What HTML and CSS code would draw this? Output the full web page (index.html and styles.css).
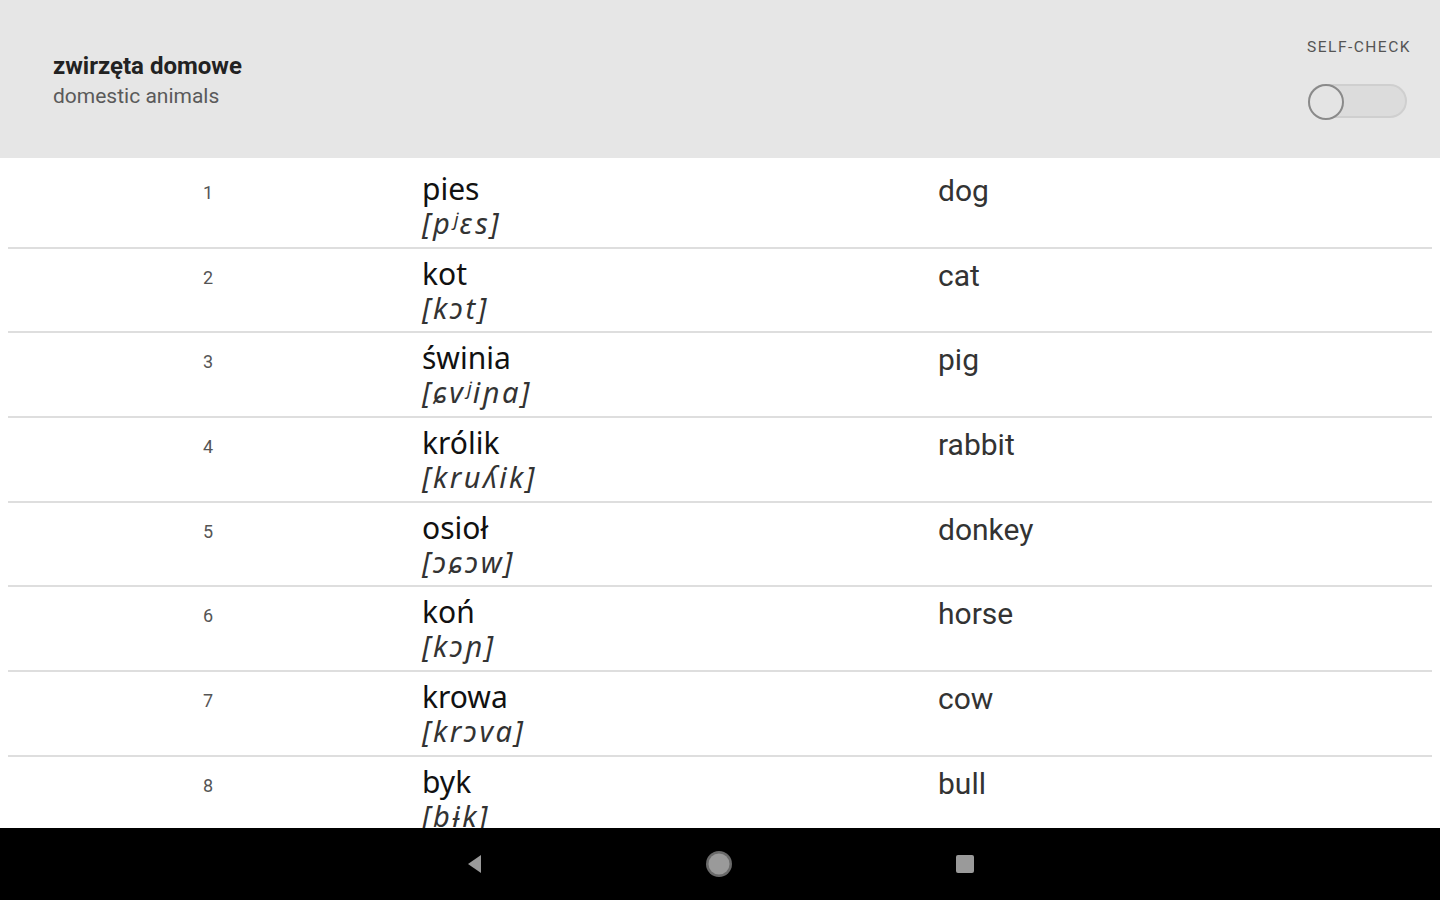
FILE: index.html
```html
<!DOCTYPE html>
<html lang="pl">
<head>
<meta charset="utf-8">
<title>zwirzęta domowe</title>
<link rel="stylesheet" href="styles.css">
</head>
<body>
<div class="screen">
  <header class="header">
    <div class="titles">
      <div class="title">zwirzęta domowe</div>
      <div class="subtitle">domestic animals</div>
    </div>
    <div class="selfcheck">
      <div class="sc-label">SELF-CHECK</div>
      <div class="switch"><div class="thumb"></div></div>
    </div>
  </header>
  <main class="list">
    <div class="row"><div class="num">1</div><div class="word"><div class="pl">pies</div><div class="ipa">[pʲɛs]</div></div><div class="en">dog</div></div>
    <div class="row"><div class="num">2</div><div class="word"><div class="pl">kot</div><div class="ipa">[kɔt]</div></div><div class="en">cat</div></div>
    <div class="row"><div class="num">3</div><div class="word"><div class="pl">świnia</div><div class="ipa">[ɕvʲiɲa]</div></div><div class="en">pig</div></div>
    <div class="row"><div class="num">4</div><div class="word"><div class="pl">królik</div><div class="ipa">[kruʎik]</div></div><div class="en">rabbit</div></div>
    <div class="row"><div class="num">5</div><div class="word"><div class="pl">osioł</div><div class="ipa">[ɔɕɔw]</div></div><div class="en">donkey</div></div>
    <div class="row"><div class="num">6</div><div class="word"><div class="pl">koń</div><div class="ipa">[kɔɲ]</div></div><div class="en">horse</div></div>
    <div class="row"><div class="num">7</div><div class="word"><div class="pl">krowa</div><div class="ipa">[krɔva]</div></div><div class="en">cow</div></div>
    <div class="row"><div class="num">8</div><div class="word"><div class="pl">byk</div><div class="ipa">[bɨk]</div></div><div class="en">bull</div></div>
  </main>
  <nav class="navbar">
    <svg class="nav-icon" width="20" height="22" viewBox="0 0 20 22"><path d="M17 2 L4 11 L17 20 Z" fill="#9a9a9a"/></svg>
    <svg class="nav-icon" width="30" height="30" viewBox="0 0 30 30"><circle cx="15" cy="15" r="13" fill="#6a6a6a"/><circle cx="15" cy="15" r="10.5" fill="#9a9a9a"/></svg>
    <svg class="nav-icon" width="22" height="22" viewBox="0 0 22 22"><rect x="2" y="2" width="18" height="18" rx="2" fill="#9a9a9a"/></svg>
  </nav>
</div>
</body>
</html>
```
FILE: styles.css
```css
* { box-sizing: border-box; }
html, body { margin: 0; padding: 0; }
body {
  background: #ffffff;
  font-family: Roboto, "Noto Sans", sans-serif;
}
.screen {
  width: 1440px;
  height: 900px;
  display: flex;
  flex-direction: column;
  overflow: hidden;
}
.header {
  height: 158px;
  flex: none;
  background: #e6e6e6;
  display: flex;
  justify-content: space-between;
  padding: 0 30px 0 53px;
}
.titles {
  padding-top: 51px;
}
.title {
  font-family: Roboto, sans-serif;
  font-weight: 700;
  font-size: 24px;
  line-height: 30px;
  color: #222;
}
.subtitle {
  font-family: Roboto, sans-serif;
  font-size: 21px;
  line-height: 30px;
  color: #5a5a5a;
}
.selfcheck {
  padding-top: 37px;
  display: flex;
  flex-direction: column;
  align-items: flex-end;
}
.sc-label {
  font-family: Roboto, sans-serif;
  font-size: 15.5px;
  line-height: 20px;
  color: #555;
  letter-spacing: 1.5px;
  margin-right: -1px;
}
.switch {
  margin-top: 27px;
  margin-right: 3px;
  width: 99px;
  height: 34px;
  border-radius: 17px;
  background: #dcdcdc;
  border: 2px solid #cfcfcf;
  position: relative;
}
.thumb {
  position: absolute;
  left: -2px;
  top: -2px;
  width: 36px;
  height: 36px;
  border-radius: 50%;
  background: #e4e4e4;
  border: 2px solid #8a8a8a;
}
.list {
  flex: 1;
  overflow: hidden;
  padding: 6px 8px 0;
}
.row {
  height: 84.7px;
  border-bottom: 2px solid #dedede;
  display: grid;
  grid-template-columns: 400px 516px 1fr;
  align-items: start;
  padding-top: 8px;
}
.num {
  text-align: center;
  font-family: Roboto, sans-serif;
  font-size: 18px;
  line-height: 42px;
  color: #555;
}
.word {
  padding-left: 14px;
}
.pl {
  font-family: "Noto Sans", sans-serif;
  font-size: 30px;
  line-height: 34px;
  color: #111;
}
.ipa {
  font-family: "Noto Sans", sans-serif;
  font-style: italic;
  font-size: 29px;
  line-height: 34px;
  letter-spacing: 2.5px;
  color: #333;
}
.en {
  padding-left: 14px;
  font-family: Roboto, sans-serif;
  font-size: 30px;
  line-height: 38px;
  color: #333;
}
.navbar {
  height: 72px;
  flex: none;
  background: #000;
  display: flex;
  align-items: center;
  justify-content: center;
  gap: 220px;
}
```
